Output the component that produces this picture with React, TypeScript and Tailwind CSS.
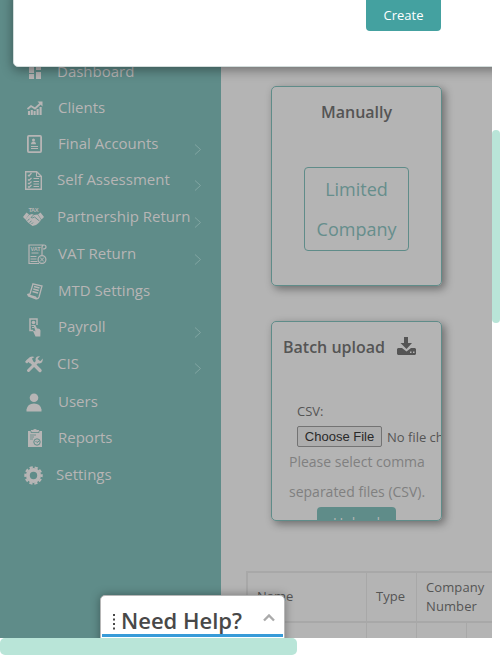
import React from "react";

const DashboardIcon = () => (
  <svg width="12" height="14" viewBox="0 0 12 14" fill="currentColor">
    <path d="M0 0h5v8H0zM0 9h5v5H0zM7 0h5v5H7zM7 7h5v7H7z" />
  </svg>
);

const ClientsIcon = () => (
  <svg width="16" height="14" viewBox="0 0 16 14" fill="none" stroke="currentColor">
    <path d="M.5 8 4 5l4 2.500L14 2" strokeWidth="1.800" />
    <path d="M10.500 .5H15.500V5.500z" fill="currentColor" stroke="none" />
    <path d="M2 14v-4M4.800 14V9M7.600 14v-4M10.600 14V8M13.600 14V6" strokeWidth="2.100" />
  </svg>
);

const AccountsIcon = () => (
  <svg width="15" height="18" viewBox="0 0 15 18" fill="none" stroke="currentColor">
    <rect x=".9" y=".9" width="13.200" height="16.200" rx="1" strokeWidth="1.800" />
    <circle cx="6.500" cy="5" r="1.500" fill="currentColor" stroke="none" />
    <path d="M4 9.200c0-3.500 5-3.500 5 0z" fill="currentColor" stroke="none" />
    <path d="M4 11.500h7M4 13.500h7" strokeWidth="1.200" />
  </svg>
);

const AssessmentIcon = () => (
  <svg width="17" height="19" viewBox="0 0 17 19" fill="none" stroke="currentColor">
    <path d="M.7.7h11l4.600 4.600v13H.7z" strokeWidth="1.400" />
    <path d="M11.500 1v4.500h4.500" />
    <path d="m3 4 1 1 2.500-3M3 8.500l1 1L6.500 7M3 12l1 1 2.500-2.500M3 15.500l1 1L6.500 14M8.500 7.500H14M8.500 10.500H14M8.500 13h5.500M8.500 15.500H14" strokeWidth="1.200" />
  </svg>
);

const PartnershipIcon = () => (
  <svg className="shrink-0" width="21" height="18" viewBox="0 0 21 18" fill="currentColor">
    <text x="5.500" y="4.400" fontSize="5.800" fontWeight="700" textLength="10" fontFamily="Liberation Sans, sans-serif">TAX</text>
    <path d="M0 9 3.500 4.500 6 6.500 2.500 11.500zM21 9l-3.500-4.500L15 6.500l3.500 5z" />
    <path d="m6 7 3-1 2 1 3.500-.5 3.500 5-1 2-2 2-2 1.500-3.500 1L5 14.500l-2.500-3 1.500-2z" />
    <path d="m10.500 7-2.500 2.500q1.500 1 3.500-.5l5 4M4.500 12.500l2-1.500M6.500 14.500 8.500 13M8.500 16l1.500-1.500" fill="none" stroke="#5f8c89" strokeWidth=".9" />
  </svg>
);

const VatIcon = () => (
  <svg width="19" height="21" viewBox="0 0 19 21" fill="none" stroke="currentColor">
    <path d="M11 19.500H1V1h15M14 11V3.500Q14 1 16 1t2 2-3 2" strokeWidth="1.200" />
    <text x="2.500" y="7" fontSize="5.500" fontWeight="700" fontFamily="Liberation Sans, sans-serif" fill="currentColor" stroke="none">VAT</text>
    <path d="M3.500 9h7M2.500 12.500h6M2.500 15h6M2.500 17.500h7" />
    <circle cx="14" cy="15.500" r="3.900" strokeWidth="1.200" />
    <path d="m12 17.500 4-4M12.200 13.500l3.600 4" />
  </svg>
);

const MtdIcon = () => (
  <svg width="16" height="17" viewBox="0 0 16 17" fill="none" stroke="currentColor" strokeWidth="1.300">
    <path d="M6 .8 15 3l-3 11q-1 2.300-3 1.800L1.500 13 .8 11.500 3 11zM1 12l7.500 2q.5 1.500 1.500 1.500" />
    <path d="m7 3.500 5.500 1.500M6.300 6l5.500 1.500M5.500 8.500l5.500 1.500" />
  </svg>
);

const PayrollIcon = () => (
  <svg width="12" height="19" viewBox="0 0 12 19" fill="none" stroke="currentColor">
    <path d="M4 12.500H1V1h7v6" strokeWidth="1.500" />
    <circle cx="4.500" cy="4.500" r="1.800" fill="currentColor" stroke="none" />
    <path d="M2.500 7.500h4M3 9.500h2" />
    <path d="M4.800 8q1.200-1 2.200.5l1 2q3-.5 3.500 2l-.2 6H6.500L4 13l1-.500 1.500 1z" fill="currentColor" stroke="none" />
  </svg>
);

const ToolsIcon = () => (
  <svg width="18" height="17" viewBox="0 0 18 17" fill="none" stroke="currentColor">
    <path d="M6 5.500 15 14.500" strokeWidth="3.400" strokeLinecap="round" />
    <path fill="currentColor" stroke="none" d="M0 6 1.500 4 5 1Q7 0 9.500 1L7 2.500 8 5 5 7.500 3.500 6 2 7.500z" />
    <path d="m3.500 14.500 9.500-9.500" strokeWidth="3" strokeLinecap="round" />
    <path fill="currentColor" stroke="none" d="M15 .3q-4-.5-4.500 3L11 7l3.500.5q3.500-.5 3.300-5L15.500 5 13 4.700 12.700 2.500z" />
  </svg>
);

const UserIcon = () => (
  <svg width="16" height="19" viewBox="0 0 16 19" fill="currentColor">
    <circle cx="8" cy="4.700" r="4.300" />
    <path d="M.5 18.500v-2q1-6 7.500-6t7.500 6v2z" />
  </svg>
);

const ReportsIcon = () => (
  <svg width="14" height="18" viewBox="0 0 14 18">
    <path fill="currentColor" d="M0 2h3V1h2q2-2 4 0h2v1h3v16H0z" />
    <path d="M3 2v1.500h8V2M2 6h6M2 8h4M2 10h3" stroke="#5f8c89" strokeWidth=".8" fill="none" />
    <circle cx="9" cy="13" r="3.200" stroke="#5f8c89" fill="none" />
    <path d="m7.500 12 1.500 1.500 2-1.500" stroke="#5f8c89" fill="none" />
  </svg>
);

const GearIcon = () => (
  <svg width="19" height="19" viewBox="0 0 19 19" fill="none" stroke="currentColor">
    <circle cx="9.500" cy="9.500" r="5.600" strokeWidth="3.800" />
    <circle cx="9.500" cy="9.500" r="8.100" strokeWidth="2.200" strokeDasharray="3.200 1.889" strokeDashoffset="1.600" />
  </svg>
);

const items = [
  { label: "Dashboard", icon: <DashboardIcon />, row: "", text: "ml-[57px]", iconBox: "left-[23px]", arrow: "" },
  { label: "Clients", icon: <ClientsIcon />, row: "", text: "ml-[58px]", iconBox: "left-[23px]", arrow: "" },
  { label: "Final Accounts", icon: <AccountsIcon />, row: "", text: "ml-[58px]", iconBox: "left-[22px]", arrow: "top-[19px]" },
  { label: "Self Assessment", icon: <AssessmentIcon />, row: "", text: "ml-[57px]", iconBox: "left-[21px]", arrow: "top-[19px]" },
  { label: "Partnership Return", icon: <PartnershipIcon />, row: "mt-px", text: "ml-[57px]", iconBox: "left-[21px]", arrow: "top-[19px]" },
  { label: "VAT Return", icon: <VatIcon />, row: "mt-px", text: "ml-[58px]", iconBox: "left-[25px]", arrow: "top-[19px]" },
  { label: "MTD Settings", icon: <MtdIcon />, row: "mt-px", text: "ml-[58px]", iconBox: "left-[23px]", arrow: "" },
  { label: "Payroll", icon: <PayrollIcon />, row: "", text: "ml-[58px]", iconBox: "left-[23px]", arrow: "top-[19px]" },
  { label: "CIS", icon: <ToolsIcon />, row: "mt-px", text: "ml-[57px]", iconBox: "left-[22px]", arrow: "top-[18px]" },
  { label: "Users", icon: <UserIcon />, row: "mt-0.5", text: "ml-[58px]", iconBox: "left-[22px]", arrow: "" },
  { label: "Reports", icon: <ReportsIcon />, row: "", text: "ml-[58px]", iconBox: "left-[23px]", arrow: "" },
  { label: "Settings", icon: <GearIcon />, row: "mt-px", text: "ml-[56px]", iconBox: "left-[21px]", arrow: "" },
];

function Sidebar() {
  return (
    <nav className="h-full w-[221px] shrink-0 bg-[#5f8c89] pt-[53px] text-[#b7b5b5]">
      {items.map((item) => (
        <div key={item.label} className={`relative flex h-9 items-center ${item.row}`}>
          <span className={`absolute top-px flex h-9 w-6 items-center justify-center ${item.iconBox}`}>{item.icon}</span>
          <span className={`text-[15px] leading-5 whitespace-nowrap ${item.text}`}>{item.label}</span>
          {item.arrow && (
            <svg className={`absolute left-[194px] ${item.arrow}`} width="8" height="11" viewBox="0 0 8 11" fill="none" stroke="#82a5a2">
              <path d="m1 .5 5.500 5L1 10.500" />
            </svg>
          )}
        </div>
      ))}
    </nav>
  );
}

const card = "h-[200px] w-[171px] overflow-hidden rounded-[5px] border border-[#5f8c89] shadow-[3px_3px_8px_rgba(0,0,0,0.4)]";

export default function App() {
  return (
    <div className="relative h-[655px] w-[500px] overflow-hidden bg-white font-['Open_Sans',sans-serif]">
      <div className="relative flex h-[638px] w-[492px] overflow-hidden bg-[#b4b4b4]">
        <Sidebar />
        <main className="w-[271px] shrink-0 pt-[86px] text-[#555]">
          <section className={`ml-[50px] ${card}`}>
            <h2 className="mt-[13px] text-center text-base leading-6 font-semibold">Manually</h2>
            <button className="mx-auto mt-[43px] block h-[84px] w-[105px] rounded-[4px] border border-[#5f8c89] text-[18px] leading-10 text-[#668e8c]">
              Limited<br />Company
            </button>
          </section>
          <section className={`mt-[35px] ml-[50px] ${card}`}>
            <h2 className="mt-[13px] ml-[11px] flex text-base leading-6 font-semibold">
              <span className="w-[102px] whitespace-nowrap">Batch upload</span>
              <svg className="mt-[2px] ml-[12px]" width="19" height="18" viewBox="0 0 19 18" fill="#555">
                <path d="M7 0h4v6h4l-5.500 6L3.500 6H7zM1 11h4l4.500 3.500L14 11h4l1 1v5l-1 1H1l-1-1v-5z" />
                <path fill="#b4b4b4" d="M13 14.500h1.500V16H13zM16 14.500h1.500V16H16z" />
              </svg>
            </h2>
            <div className="mt-[42px] ml-[25px] text-[13px] leading-5">CSV:</div>
            <div className="mt-[5px] ml-[25px] flex w-[200px] items-center text-[13px]">
              <button className="h-[21px] w-[85px] rounded-[2px] border border-[#737373] bg-[#adadad] font-['Liberation_Sans',sans-serif] text-[13px] leading-[19px] whitespace-nowrap text-[#292929]">Choose File</button>
              <span className="ml-[5px] leading-5">No file chosen</span>
            </div>
            <p className="ml-[17px] text-[14px] leading-[30px] text-[#808080]">Please select comma<br />separated files (CSV).</p>
            <button className="ml-[45px] block h-[36px] w-[79px] rounded-[4px] bg-[#5f8c89] text-[14px] leading-[31px] text-[#b4b4b4]"><span className="block h-9">Upload</span></button>
          </section>
          <div className="mt-[50px] ml-[25px] w-[260px] border-t-2 border-l-2 border-[#a8a8a8] text-[13px] leading-[19px] font-medium">
            <div className="flex h-[50px] items-center border-b-2 border-[#a8a8a8]">
              <div className="flex h-full w-[119px] items-center border-r border-[#a8a8a8] pb-px pl-[9px]">Name</div>
              <div className="flex h-full w-[50px] items-center border-r border-[#a8a8a8] pb-px pl-[9px]">Type</div>
              <div className="pl-[9px] tracking-[0.1px]">Company<br />Number</div>
            </div>
            <div className="flex h-8">
              <div className="w-[119px] border-r border-[#a8a8a8]" />
              <div className="w-[50px] border-r border-[#a8a8a8]" />
              <div className="w-[50px] border-r border-[#a8a8a8]" />
            </div>
          </div>
        </main>
        <div className="absolute -top-3 left-[13px] h-[79px] w-[520px] rounded-[5px] border border-[#d3dddc] bg-white shadow-[0_3px_12px_rgba(0,0,0,0.4)]">
          <button className="mt-[8px] ml-[352px] block h-[34px] w-[75px] rounded-[4px] bg-[#44a1a0] pt-px text-[13px] leading-[34px] text-white">Create</button>
        </div>
        <div className="absolute top-[595px] left-[100px] flex h-[60px] w-[185px] rounded-t-[5px] border border-[#b7b7b7] bg-white px-px shadow-[0_0_10px_rgba(0,0,0,0.35)]">
          <div className="flex h-[41px] w-full border-b-3 border-[#379bd8] pl-[10px] text-[#484848]">
            <svg className="mt-[18px]" width="4" height="16" viewBox="0 0 4 16" fill="#484848">
              <path d="M1 0h2v2H1zM1 4.500h2v2H1zM1 9h2v2H1zM1 13.500h2v2H1z" />
            </svg>
            <span className="ml-[5px] pt-[8px] text-[22px] leading-8 font-semibold">Need Help?</span>
            <svg className="mt-[18px] ml-auto mr-[8px]" width="12" height="8" viewBox="0 0 12 8" fill="none" stroke="#aaa" strokeWidth="2.400">
              <path d="m1 6.500 5-5 5 5" />
            </svg>
          </div>
        </div>
      </div>
      <div className="h-[17px] w-[297px] rounded-[5px] bg-[#b9e5d8]" />
      <div className="absolute top-[130px] right-0 h-[193px] w-2 rounded-[4px] bg-[#b9e5d8]" />
    </div>
  );
}
